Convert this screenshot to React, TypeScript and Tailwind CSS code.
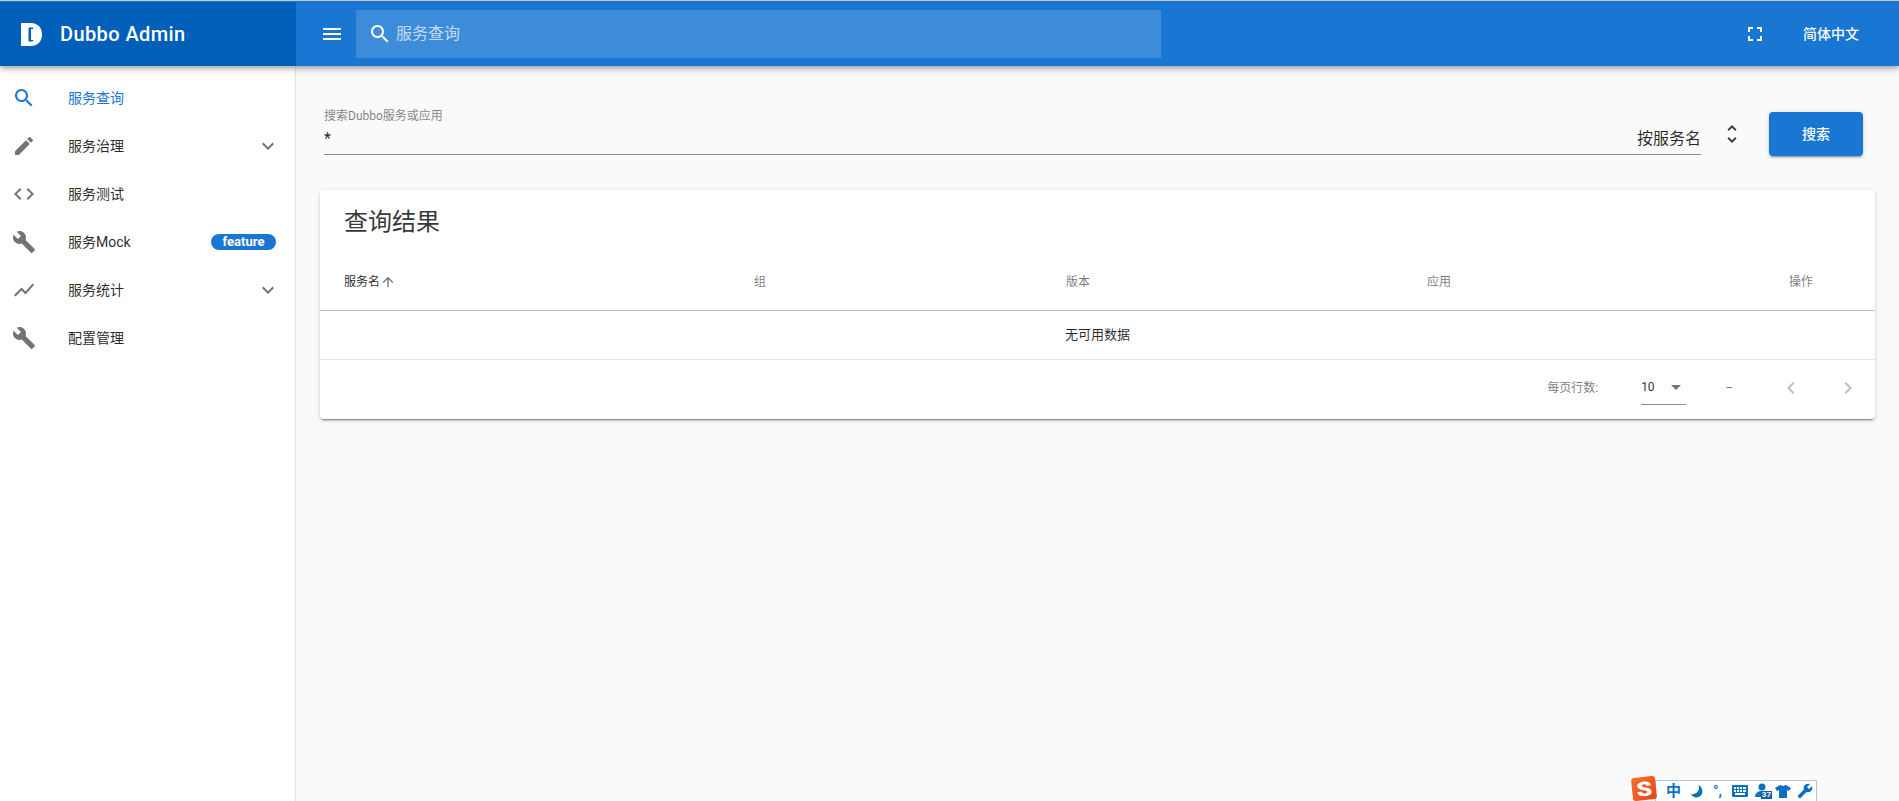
import React from 'react';

const FONT = "font-['Roboto','Noto_Sans_CJK_SC',sans-serif]";

const Icon = ({ d, className }: { d: string; className?: string }) => (
  <svg viewBox="0 0 24 24" fill="currentColor" className={`h-6 w-6 shrink-0 ${className ?? ''}`}>
    <path d={d} />
  </svg>
);

const paths = {
  search: 'M15.5 14h-.79l-.28-.27C15.41 12.59 16 11.11 16 9.5 16 5.91 13.09 3 9.5 3S3 5.91 3 9.5 5.91 16 9.5 16c1.61 0 3.09-.59 4.23-1.57l.27.28v.79l5 4.99L20.49 19l-4.99-5zm-6 0C7.01 14 5 11.99 5 9.5S7.01 5 9.5 5 14 7.01 14 9.5 11.99 14 9.5 14z',
  edit: 'M3 17.25V21h3.75L17.81 9.94l-3.75-3.75L3 17.25zM20.71 7.04c.39-.39.39-1.02 0-1.41l-2.34-2.34c-.39-.39-1.02-.39-1.41 0l-1.83 1.83 3.75 3.75 1.83-1.83z',
  code: 'M9.4 16.6L4.8 12l4.6-4.6L8 6l-6 6 6 6 1.4-1.4zm5.2 0l4.6-4.6-4.6-4.6L16 6l6 6-6 6-1.4-1.4z',
  build: 'M22.7 19l-9.1-9.1c.9-2.3.4-5-1.5-6.9-2-2-5-2.4-7.4-1.3L9 6 6 9 1.6 4.7C.4 7.1.9 10.1 2.9 12.1c1.9 1.9 4.6 2.4 6.9 1.5l9.1 9.1c.4.4 1 .4 1.4 0l2.3-2.3c.5-.4.5-1.1.1-1.4z',
  chart: 'M3.5 18.49l6-6.01 4 4L22 6.92l-1.41-1.41-7.09 7.97-4-4L2 16.99z',
  down: 'M7.41 8.59L12 13.17l4.59-4.58L18 10l-6 6-6-6 1.41-1.41z',
  menu: 'M3 18h18v-2H3v2zm0-5h18v-2H3v2zm0-7v2h18V6H3z',
  fullscreen: 'M7 14H5v5h5v-2H7v-3zm-2-4h2V7h3V5H5v5zm12 7h-3v2h5v-5h-2v3zM14 5v2h3v3h2V5h-5z',
  unfold: 'M12 5.83L15.17 9l1.41-1.41L12 3 7.41 7.59 8.83 9 12 5.83zm0 12.34L8.83 15l-1.41 1.41L12 21l4.59-4.59L15.17 15 12 18.17z',
  up: 'M4 12l1.41 1.41L11 7.83V20h2V7.83l5.58 5.59L20 12l-8-8-8 8z',
  left: 'M15.41 7.41L14 6l-6 6 6 6 1.41-1.41L10.83 12z',
  right: 'M10 6L8.59 7.41 13.17 12l-4.58 4.59L10 18l6-6z',
  drop: 'M7 10l5 5 5-5z',
};

const navItems = [
  { label: '服务查询', icon: paths.search, active: true },
  { label: '服务治理', icon: paths.edit, arrow: true },
  { label: '服务测试', icon: paths.code },
  { label: '服务Mock', icon: paths.build, badge: 'feature' },
  { label: '服务统计', icon: paths.chart, arrow: true },
  { label: '配置管理', icon: paths.build },
];

const NavRow = ({ item }: { item: (typeof navItems)[number] }) => (
  <div className={`flex h-12 items-center pl-3 pr-[19px] text-sm ${item.active ? 'text-[#1976d2]' : 'text-black/85'}`}>
    <Icon d={item.icon} className={item.active ? 'text-[#1976d2]' : 'text-black/55'} />
    <span className="ml-8 flex-1">{item.label}</span>
    {item.badge && (
      <span className="flex h-4 w-[65px] items-center justify-center rounded-full bg-[#1976d2] text-[13px] font-bold text-white">
        {item.badge}
      </span>
    )}
    {item.arrow && <Icon d={paths.down} className="-mr-1 text-black/55" />}
  </div>
);

const Logo = () => (
  <svg viewBox="0 0 21 23" className="h-[23px] w-[21px] shrink-0">
    <path d="M0 0H10C17 0 21 5 21 11.5C21 18 17 23 10 23H0Z" fill="#fff" />
    <path d="M12 4.5H7.5V18.5H12V17H10V6H12Z" fill="#005fb8" />
  </svg>
);

// floating input-method toolbar in the bottom corner of the screenshot
const ImeBar = () => (
  <div className="absolute bottom-0 left-[1632px] flex h-6 items-end">
    <div className="z-10 mb-px flex h-[23px] w-6 -rotate-6 items-center justify-center rounded-[3px] bg-gradient-to-br from-[#f9702a] to-[#e8431a] text-[20px] font-black leading-none text-white">
      <span className="scale-x-125">S</span>
    </div>
    <div className="-ml-px flex h-[21px] w-[162px] items-center border-l border-r border-t border-[#b4c8dc] bg-white pl-[10px] text-[#0b6fc2]">
      <span className="text-[15px] font-bold leading-none">中</span>
      <svg viewBox="0 0 16 16" className="ml-[8px] h-[15px] w-[15px]" fill="currentColor"><path d="M10 1C12 6 9 11 2 11 5 16 12 15 14 10 15 6 13 2 10 1Z" /></svg>
      <span className="ml-[9px] w-[11px] text-[14px] font-bold leading-none">°,</span>
      <svg viewBox="0 0 16 12" className="ml-2 h-3 w-4" fill="currentColor"><path d="M0 1a1 1 0 0 1 1-1h14a1 1 0 0 1 1 1v10a1 1 0 0 1-1 1H1a1 1 0 0 1-1-1ZM2 2v2h2V2Zm3 0v2h2V2Zm3 0v2h2V2Zm3 0v2h3V2ZM2 5v2h2V5Zm3 0v2h2V5Zm3 0v2h2V5Zm3 0v2h3V5ZM3 8v2h10V8Z" fillRule="evenodd" /></svg>
      <div className="relative ml-[7px] h-4 w-[17px]">
        <svg viewBox="0 0 16 16" className="h-4 w-4" fill="currentColor"><circle cx="7" cy="4" r="3.5" /><path d="M0 14C0 9 4 8 7 8s7 1 7 6Z" /></svg>
        <span className="absolute bottom-0 right-0 bg-[#0b5fa8] px-px text-[8px] font-bold leading-[8px] text-white">37</span>
      </div>
      <svg viewBox="0 0 16 16" className="ml-[3px] h-4 w-4" fill="currentColor"><path d="M5 2 8 3 11 2 16 5 14 8 12 7V15H4V7L2 8 0 5Z" /></svg>
      <svg viewBox="0 0 24 24" className="ml-[6px] h-4 w-4 -scale-x-100" fill="currentColor"><path d={paths.build} /></svg>
    </div>
  </div>
);

export default function App() {
  return (
    <div className={`relative flex h-screen w-full flex-col overflow-hidden bg-[#fafafa] ${FONT}`}>
      <header className="z-20 flex h-[66px] shrink-0 border-t border-t-[#c8c8c8] bg-[#1976d2] pt-px text-white shadow-[0_2px_4px_-1px_rgba(0,0,0,.2),0_4px_5px_0_rgba(0,0,0,.14),0_1px_10px_0_rgba(0,0,0,.12)]">
        <div className="flex w-[296px] items-center gap-[18px] bg-[#005fb8] pl-[21px]">
          <Logo />
          <span className="text-xl font-medium tracking-[.02em]">Dubbo Admin</span>
        </div>
        <div className="flex flex-1 items-center pl-6 pr-10">
          <Icon d={paths.menu} />
          <div className="ml-3 flex h-12 w-[805px] items-center bg-white/[.16] pl-3">
            <Icon d={paths.search} />
            <span className="ml-1 text-base text-white/70">服务查询</span>
          </div>
          <div className="flex-1" />
          <Icon d={paths.fullscreen} />
          <span className="ml-9 text-sm font-medium">简体中文</span>
        </div>
      </header>

      <div className="flex min-h-0 flex-1">
        <aside className="w-[296px] shrink-0 border-r border-r-[#e0e0e0] bg-white pt-2">
          {navItems.map((item) => (
            <NavRow key={item.label} item={item} />
          ))}
        </aside>

        <main className="flex-1 pl-6 pr-6">
          <div className="flex items-start pl-1 pt-[46px]">
            <div className="h-[43px] flex-1 border-b border-b-black/45">
              <div className="flex h-full justify-between">
                <div className="-mt-1">
                  <div className="text-xs leading-4 text-black/50">搜索Dubbo服务或应用</div>
                  <div className="mt-[5px] text-base leading-5 text-black/85">*</div>
                </div>
                <div className="self-end pb-[3px] text-base leading-6 text-black/85">按服务名</div>
              </div>
            </div>
            <Icon d={paths.unfold} className="ml-[19px] mt-2.5 text-black/75" />
            <button className="ml-[25px] mr-3 h-11 w-[94px] rounded-sm bg-[#1976d2] text-sm font-medium text-white shadow-[0_3px_1px_-2px_rgba(0,0,0,.2),0_2px_2px_0_rgba(0,0,0,.14),0_1px_5px_0_rgba(0,0,0,.12)]">
              搜索
            </button>
          </div>

          <section className="mt-[34px] rounded-sm bg-white shadow-[0_3px_1px_-2px_rgba(0,0,0,.3),0_2px_2px_0_rgba(0,0,0,.14),0_1px_5px_0_rgba(0,0,0,.12)]">
            <h2 className="flex h-[64px] items-center px-6 text-2xl font-normal text-black/80">查询结果</h2>
            <div className="grid h-[57px] grid-cols-[410px_312px_361px_362px_1fr] items-center border-b border-b-black/25 px-6 text-xs text-black/55">
              <span className="flex items-center text-black/85">
                服务名
                <Icon d={paths.up} className="!h-4 !w-4 text-black/55" />
              </span>
              <span>组</span>
              <span>版本</span>
              <span>应用</span>
              <span>操作</span>
            </div>
            <div className="flex h-[49px] items-center justify-center border-b border-b-black/10 text-[13px] text-black/85">
              无可用数据
            </div>
            <div className="flex h-[59px] items-center justify-end pb-1 text-xs text-black/55">
              <span>每页行数:</span>
              <div className="ml-[43px] flex h-[34px] w-[45px] items-center justify-between border-b border-b-black/45 text-black/85">
                <span>10</span>
                <Icon d={paths.drop} className="-mr-[2px] text-black/55" />
              </div>
              <span className="ml-[39px]">–</span>
              <Icon d={paths.left} className="ml-[46px] text-black/25" />
              <Icon d={paths.right} className="ml-[33px] mr-[15px] text-black/25" />
            </div>
          </section>
        </main>
      </div>

      <ImeBar />
    </div>
  );
}
